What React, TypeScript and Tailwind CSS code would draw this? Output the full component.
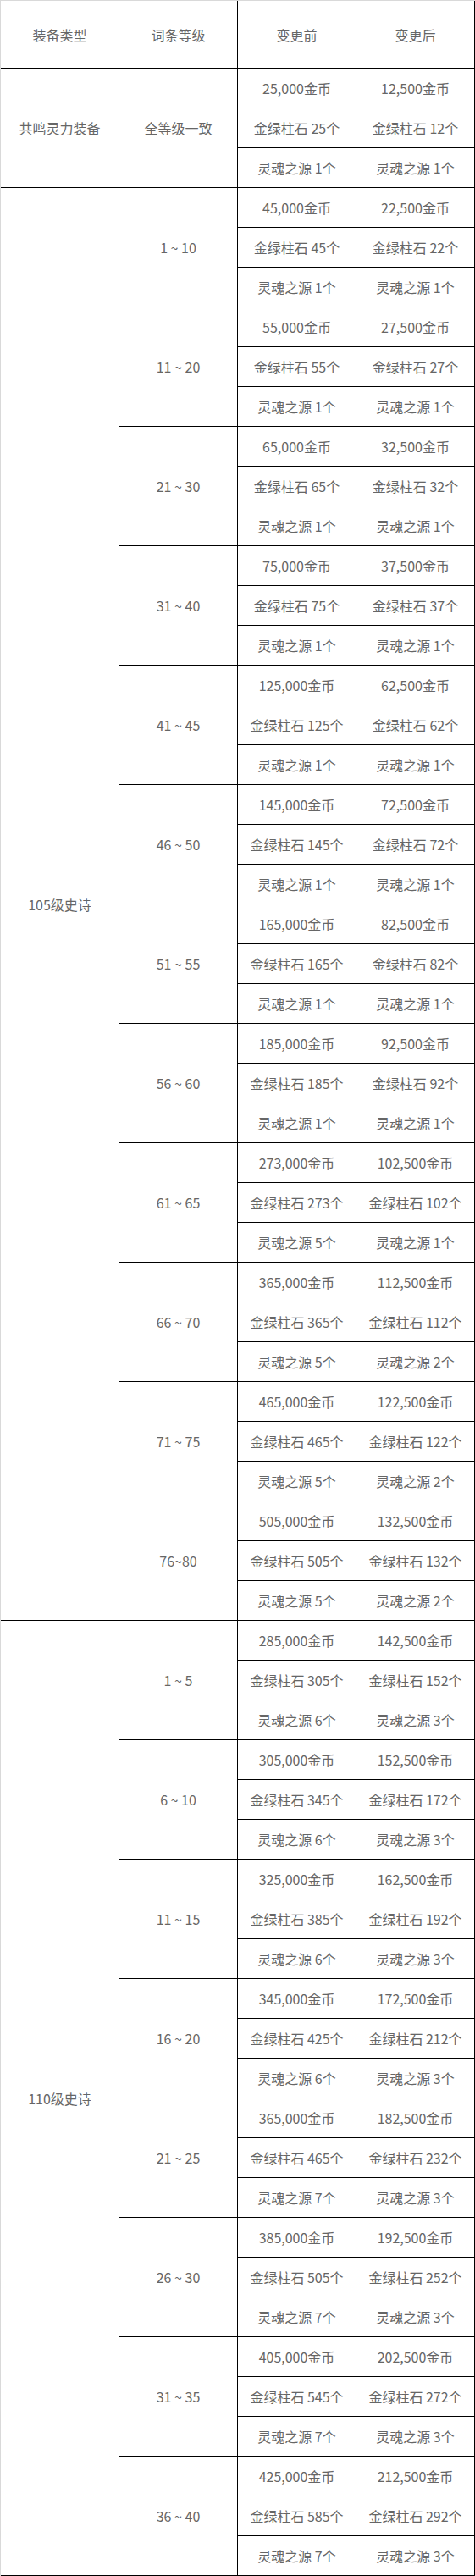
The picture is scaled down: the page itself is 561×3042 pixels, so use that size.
type Group = {
  level: string;
  before: [string, string, string];
  after: [string, string, string];
};

type Section = {
  type: string;
  groups: Group[];
};

const g = (level: string, gb: string, ga: string, sb: number, sa: number, hb: number, ha: number): Group => ({
  level,
  before: [`${gb}金币`, `金绿柱石 ${sb}个`, `灵魂之源 ${hb}个`],
  after: [`${ga}金币`, `金绿柱石 ${sa}个`, `灵魂之源 ${ha}个`],
});

const sections: Section[] = [
  {
    type: "共鸣灵力装备",
    groups: [g("全等级一致", "25,000", "12,500", 25, 12, 1, 1)],
  },
  {
    type: "105级史诗",
    groups: [
      g("1 ~ 10", "45,000", "22,500", 45, 22, 1, 1),
      g("11 ~ 20", "55,000", "27,500", 55, 27, 1, 1),
      g("21 ~ 30", "65,000", "32,500", 65, 32, 1, 1),
      g("31 ~ 40", "75,000", "37,500", 75, 37, 1, 1),
      g("41 ~ 45", "125,000", "62,500", 125, 62, 1, 1),
      g("46 ~ 50", "145,000", "72,500", 145, 72, 1, 1),
      g("51 ~ 55", "165,000", "82,500", 165, 82, 1, 1),
      g("56 ~ 60", "185,000", "92,500", 185, 92, 1, 1),
      g("61 ~ 65", "273,000", "102,500", 273, 102, 5, 1),
      g("66 ~ 70", "365,000", "112,500", 365, 112, 5, 2),
      g("71 ~ 75", "465,000", "122,500", 465, 122, 5, 2),
      g("76~80", "505,000", "132,500", 505, 132, 5, 2),
    ],
  },
  {
    type: "110级史诗",
    groups: [
      g("1 ~ 5", "285,000", "142,500", 305, 152, 6, 3),
      g("6 ~ 10", "305,000", "152,500", 345, 172, 6, 3),
      g("11 ~ 15", "325,000", "162,500", 385, 192, 6, 3),
      g("16 ~ 20", "345,000", "172,500", 425, 212, 6, 3),
      g("21 ~ 25", "365,000", "182,500", 465, 232, 7, 3),
      g("26 ~ 30", "385,000", "192,500", 505, 252, 7, 3),
      g("31 ~ 35", "405,000", "202,500", 545, 272, 7, 3),
      g("36 ~ 40", "425,000", "212,500", 585, 292, 7, 3),
    ],
  },
];

const cell = "w-[140px] shrink-0 flex items-center justify-center border-r border-b border-black whitespace-nowrap";

export default function App() {
  return (
    <div
      className="w-[561px] bg-white border-l border-t border-[#d9d9d9] text-[16px] text-[#666] leading-none"
      style={{ fontFamily: '"Noto Sans CJK SC", "Noto Sans", sans-serif' }}
    >
      <div className="flex h-[80px]">
        {["装备类型", "词条等级", "变更前", "变更后"].map((h) => (
          <div key={h} className={cell}>
            {h}
          </div>
        ))}
      </div>

      {sections.map((s) => (
        <div key={s.type} className="flex">
          <div className={cell}>{s.type}</div>
          <div className="flex flex-col">
            {s.groups.map((grp) => (
              <div key={grp.level} className="flex">
                <div className={cell}>{grp.level}</div>
                <div className="flex flex-col">
                  {grp.before.map((b, i) => (
                    <div key={i} className="flex h-[47px]">
                      <div className={cell}>{b}</div>
                      <div className={cell}>{grp.after[i]}</div>
                    </div>
                  ))}
                </div>
              </div>
            ))}
          </div>
        </div>
      ))}
    </div>
  );
}
